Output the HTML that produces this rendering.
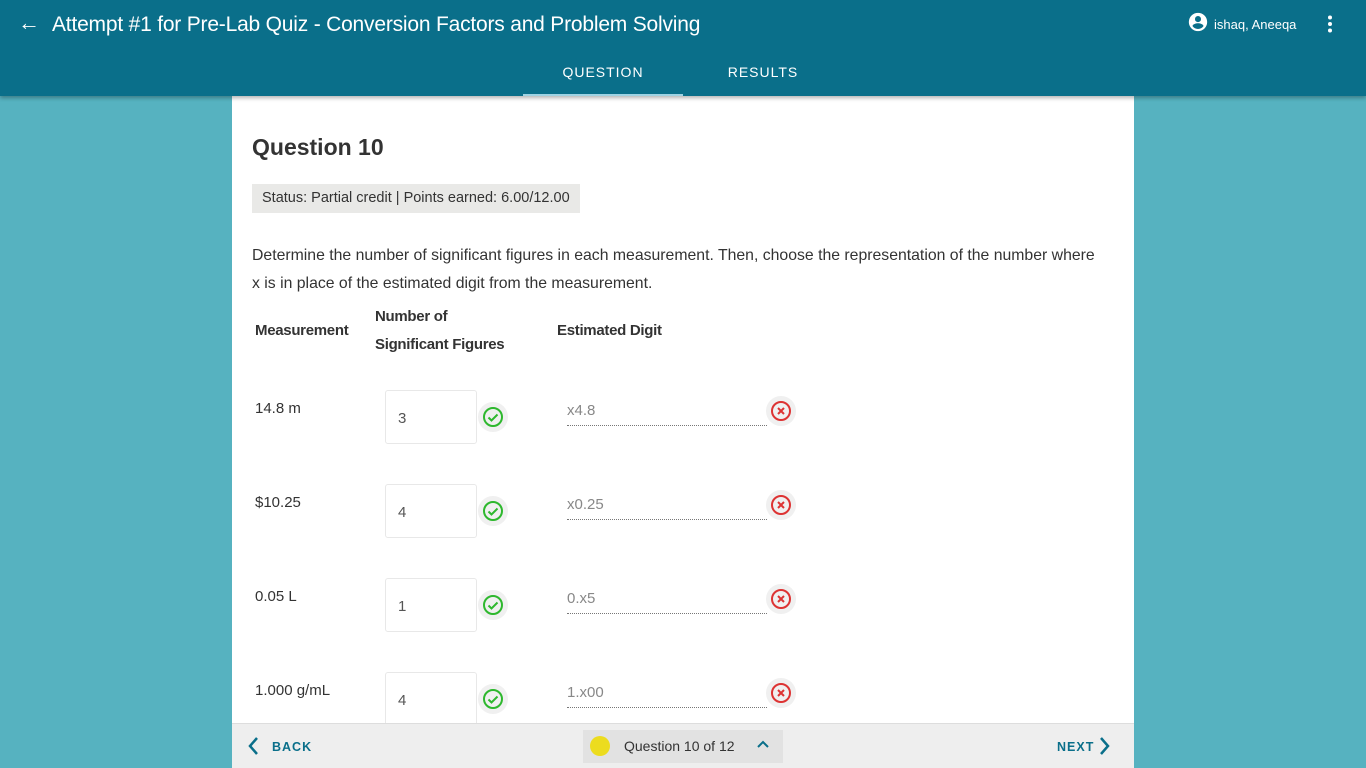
<!DOCTYPE html>
<html><head><meta charset="utf-8"><style>
*{box-sizing:border-box;margin:0;padding:0}
body{width:1366px;height:768px;overflow:hidden;background:#56b2c0;font-family:"Liberation Sans",sans-serif;position:relative;color:#333}
.hdr{position:absolute;left:0;top:0;width:1366px;height:96px;background:#0a6f8a;box-shadow:0 2px 4px rgba(0,0,0,.3);z-index:2;color:#fff}
.title{position:absolute;left:52px;top:13px;font-size:21px;letter-spacing:-.2px}
.arrow{position:absolute;left:18px;top:10px;font-size:22px}
.tab{position:absolute;top:64px;font-size:14px;letter-spacing:1px;text-align:center;width:160px}
.user{position:absolute;left:1214px;top:17px;font-size:13px}
.card{position:absolute;left:232px;top:96px;width:902px;height:672px;background:#fff}
.h{position:absolute;left:20px;top:38px;font-size:23px;font-weight:bold;color:#333}
.status{position:absolute;left:20px;top:88px;background:#e9e9e7;padding:6px 10px;font-size:14.5px;height:29px}
.p{position:absolute;left:20px;top:146px;width:845px;font-size:15.8px;line-height:28px}
.th{position:absolute;font-size:15px;font-weight:bold;line-height:28px;letter-spacing:-.3px}
.lbl{position:absolute;left:23px;font-size:15px}
.box{position:absolute;left:153px;width:92px;height:54px;border:1px solid #e8e8e8;border-radius:3px;font-size:15px;color:#555;padding:19px 0 0 12px}
.ok,.bad{position:absolute;width:30px;height:30px;border-radius:50%;background:#f0f0f0}
.ok{left:246px}.bad{left:534px}
.ok svg,.bad svg{position:absolute;left:4px;top:4px}
.in{position:absolute;left:335px;width:200px;border-bottom:1px dotted #777;font-size:15px;color:#888;height:27px;padding-top:3px}
.foot{position:absolute;left:232px;top:723px;width:902px;height:45px;background:#eee;border-top:1px solid #ddd;font-size:12.5px;letter-spacing:1px;color:#0a6f8a;font-weight:bold}
</style></head><body>
<div class="hdr">
<div class="arrow">&#8592;</div>
<div class="title">Attempt #1 for Pre-Lab Quiz - Conversion Factors and Problem Solving</div>
<div class="tab" style="left:523px">QUESTION</div>
<div style="position:absolute;left:523px;top:94px;width:160px;height:2px;background:#9fd3e3"></div>
<div class="tab" style="left:683px">RESULTS</div>
<svg style="position:absolute;left:1187px;top:11px" width="22" height="22" viewBox="0 0 24 24"><path fill="#fff" d="M12 2a10 10 0 100 20 10 10 0 000-20zm0 3.5a3.3 3.3 0 110 6.6 3.3 3.3 0 010-6.6zM12 19.6a7.8 7.8 0 01-6-3.1c0-2 4-3.1 6-3.1s6 1.1 6 3.1a7.8 7.8 0 01-6 3.1z"/></svg>
<div class="user">ishaq, Aneeqa</div>
<svg style="position:absolute;left:1326px;top:15px" width="8" height="18"><circle cx="4" cy="2.5" r="2" fill="#fff"/><circle cx="4" cy="9" r="2" fill="#fff"/><circle cx="4" cy="15.5" r="2" fill="#fff"/></svg>
</div>
<div class="card">
<div class="h">Question 10</div>
<div class="status">Status: Partial credit | Points earned: 6.00/12.00</div>
<div class="p">Determine the number of significant figures in each measurement. Then, choose the representation of the number where x is in place of the estimated digit from the measurement.</div>
<div class="th" style="left:23px;top:221px">Measurement</div>
<div class="th" style="left:143px;top:207px">Number of<br>Significant Figures</div>
<div class="th" style="left:325px;top:221px">Estimated Digit</div>

<div class="lbl" style="top:304px">14.8 m</div>
<div class="box" style="top:294px">3</div>
<div class="ok" style="top:306px"><svg width="22" height="22"><circle cx="11" cy="11" r="9" fill="none" stroke="#2eb82e" stroke-width="2"/><path d="M6.5 11.5l3 3 6-6" fill="none" stroke="#2eb82e" stroke-width="2"/></svg></div>
<div class="in" style="top:303px">x4.8</div>
<div class="bad" style="top:300px"><svg width="22" height="22"><circle cx="11" cy="11" r="9" fill="none" stroke="#d33" stroke-width="2"/><path d="M8 8l6 6M14 8l-6 6" stroke="#d33" stroke-width="2"/></svg></div>

<div class="lbl" style="top:398px">$10.25</div>
<div class="box" style="top:388px">4</div>
<div class="ok" style="top:400px"><svg width="22" height="22"><circle cx="11" cy="11" r="9" fill="none" stroke="#2eb82e" stroke-width="2"/><path d="M6.5 11.5l3 3 6-6" fill="none" stroke="#2eb82e" stroke-width="2"/></svg></div>
<div class="in" style="top:397px">x0.25</div>
<div class="bad" style="top:394px"><svg width="22" height="22"><circle cx="11" cy="11" r="9" fill="none" stroke="#d33" stroke-width="2"/><path d="M8 8l6 6M14 8l-6 6" stroke="#d33" stroke-width="2"/></svg></div>

<div class="lbl" style="top:492px">0.05 L</div>
<div class="box" style="top:482px">1</div>
<div class="ok" style="top:494px"><svg width="22" height="22"><circle cx="11" cy="11" r="9" fill="none" stroke="#2eb82e" stroke-width="2"/><path d="M6.5 11.5l3 3 6-6" fill="none" stroke="#2eb82e" stroke-width="2"/></svg></div>
<div class="in" style="top:491px">0.x5</div>
<div class="bad" style="top:488px"><svg width="22" height="22"><circle cx="11" cy="11" r="9" fill="none" stroke="#d33" stroke-width="2"/><path d="M8 8l6 6M14 8l-6 6" stroke="#d33" stroke-width="2"/></svg></div>

<div class="lbl" style="top:586px">1.000 g/mL</div>
<div class="box" style="top:576px">4</div>
<div class="ok" style="top:588px"><svg width="22" height="22"><circle cx="11" cy="11" r="9" fill="none" stroke="#2eb82e" stroke-width="2"/><path d="M6.5 11.5l3 3 6-6" fill="none" stroke="#2eb82e" stroke-width="2"/></svg></div>
<div class="in" style="top:585px">1.x00</div>
<div class="bad" style="top:582px"><svg width="22" height="22"><circle cx="11" cy="11" r="9" fill="none" stroke="#d33" stroke-width="2"/><path d="M8 8l6 6M14 8l-6 6" stroke="#d33" stroke-width="2"/></svg></div>
</div>
<div class="foot">
<svg style="position:absolute;left:15px;top:12px" width="12" height="20"><path d="M10 2L3 10l7 8" fill="none" stroke="#0a6f8a" stroke-width="2.5"/></svg>
<div style="position:absolute;left:40px;top:16px">BACK</div>
<div style="position:absolute;left:351px;top:6px;width:200px;height:33px;background:#e2e2e2"></div>
<div style="position:absolute;left:358px;top:12px;width:20px;height:20px;border-radius:50%;background:#ecdc1f"></div>
<div style="position:absolute;left:392px;top:14px;font-size:14px;color:#333;font-weight:normal;letter-spacing:0">Question 10 of 12</div>
<svg style="position:absolute;left:525px;top:16px" width="12" height="10"><path d="M1 7l5-5 5 5" fill="none" stroke="#0a6f8a" stroke-width="2"/></svg>
<div style="position:absolute;left:825px;top:16px">NEXT</div>
<svg style="position:absolute;left:867px;top:12px" width="12" height="20"><path d="M2 2l7 8-7 8" fill="none" stroke="#0a6f8a" stroke-width="2.5"/></svg>
</div>
</body></html>
